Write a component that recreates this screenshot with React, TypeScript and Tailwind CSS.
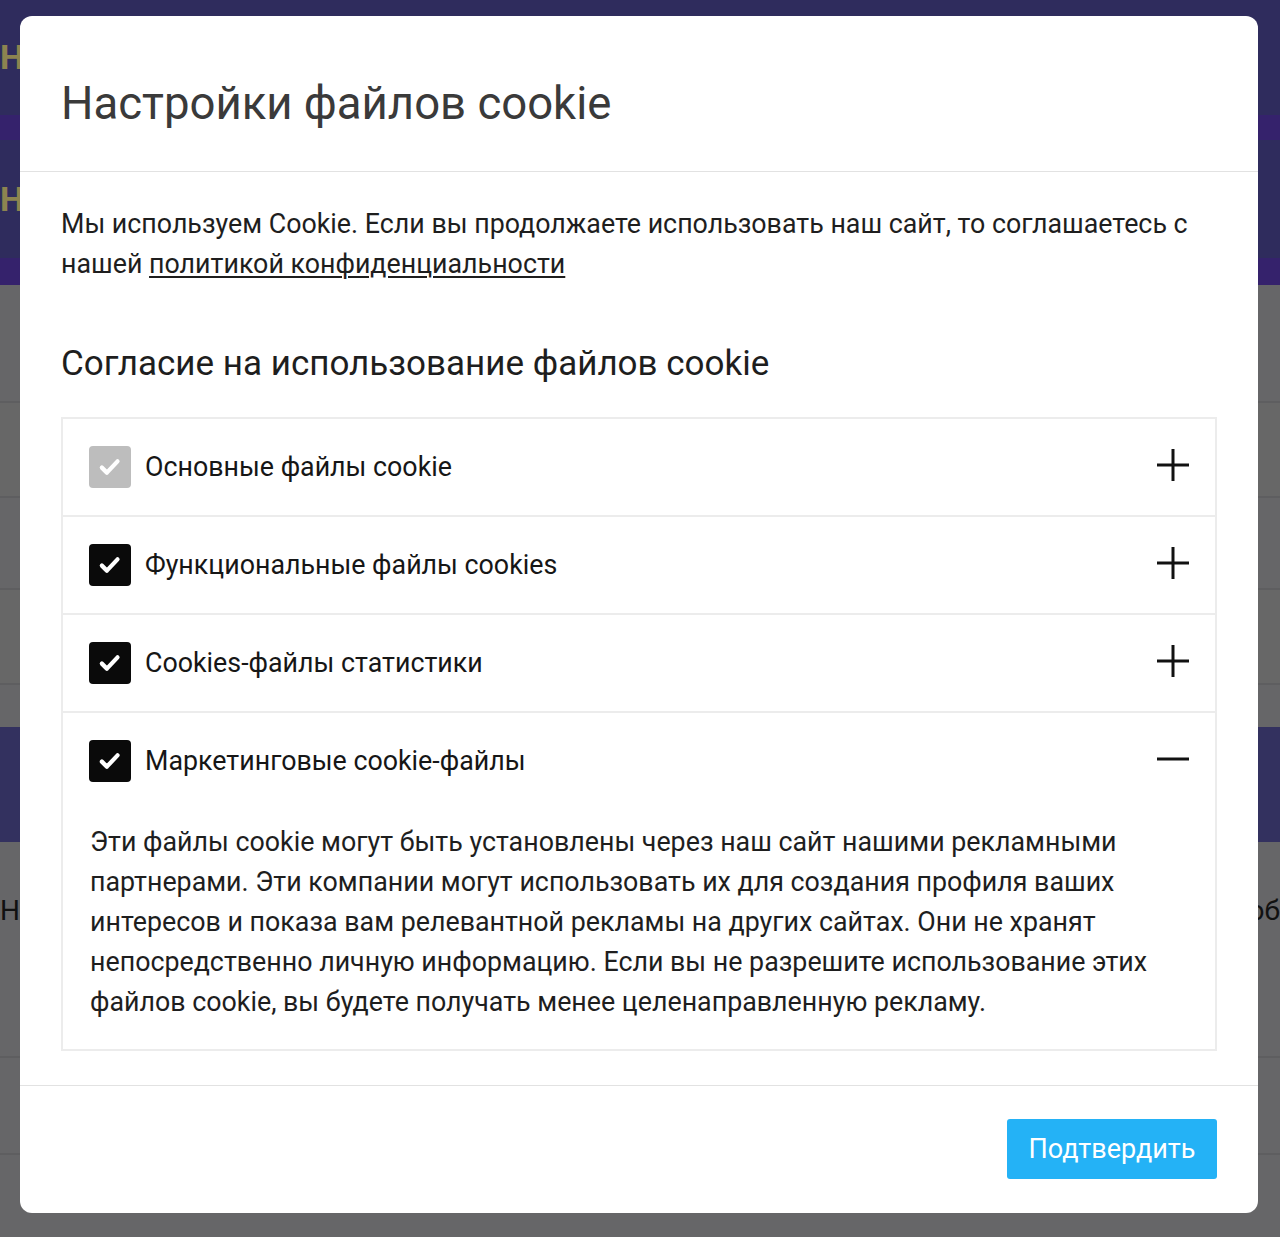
import { useState } from 'react';

const items = [
  { title: 'Основные файлы cookie', locked: true },
  { title: 'Функциональные файлы cookies', locked: false },
  { title: 'Cookies-файлы статистики', locked: false },
  {
    title: 'Маркетинговые cookie-файлы',
    locked: false,
    text: 'Эти файлы cookie могут быть установлены через наш сайт нашими рекламными партнерами. Эти компании могут использовать их для создания профиля ваших интересов и показа вам релевантной рекламы на других сайтах. Они не хранят непосредственно личную информацию. Если вы не разрешите использование этих файлов cookie, вы будете получать менее целенаправленную рекламу.',
  },
];

function Check({ locked }: { locked: boolean }) {
  return (
    <div
      className={
        'w-[42px] h-[42px] rounded-[4px] flex items-center justify-center shrink-0 ' +
        (locked ? 'bg-[#bdbdbd]' : 'bg-[#0a0a0a]')
      }
    >
      <svg width="30" height="30" viewBox="0 0 24 24" fill="none">
        <path d="M5.5 12.5l4 4 8.5-9" stroke="white" strokeWidth="3.4" strokeLinecap="round" strokeLinejoin="round" />
      </svg>
    </div>
  );
}

function Toggle({ open }: { open: boolean }) {
  return (
    <svg width="32" height="32" viewBox="0 0 32 32" className="shrink-0 -mt-[4px]">
      <path d="M0 16h32" stroke="#111" strokeWidth="3" />
      {!open && <path d="M16 0v32" stroke="#111" strokeWidth="3" />}
    </svg>
  );
}

export default function App() {
  const [open, setOpen] = useState<number | null>(3);

  return (
    <div className="relative w-full h-[1237px] overflow-hidden bg-[#666668] font-['Roboto',sans-serif]">
      {/* page behind the overlay */}
      <div className="flex flex-col">
        <div className="h-[115px] bg-[#2f2c5d] flex items-center">
          <span className="text-[34px] font-bold text-[#8c8450]">Н</span>
        </div>
        <div className="h-[25px] bg-[#35226c]" />
        <div className="h-[118px] bg-[#2f2c5d] flex items-center">
          <span className="text-[34px] font-bold text-[#8c8450]">Н</span>
        </div>
        <div className="h-[27px] bg-[#35226c]" />
        <div className="h-[118px] border-b-2 border-[#5e5e60]" />
        <div className="h-[95px] border-b-2 border-[#5e5e60] bg-[#676767]" />
        <div className="h-[92px] border-b-2 border-[#5e5e60]" />
        <div className="h-[95px] border-b-2 border-[#5e5e60] bg-[#676767]" />
        <div className="h-[42px]" />
        <div className="h-[115px] bg-[#33315f]" />
        <div className="h-[216px] border-b-2 border-[#5e5e60] flex items-start justify-between pt-[48px]">
          <span className="text-[28px] text-[#111]">На</span>
          <span className="text-[28px] text-[#111]">об</span>
        </div>
        <div className="h-[97px] border-b-2 border-[#5e5e60]" />
      </div>

      {/* modal */}
      <div className="absolute left-[20px] top-[16px] w-[1238px] h-[1197px] bg-white rounded-[12px] flex flex-col">
        <div className="px-[41px] pt-[62px] pb-[41px] border-b border-[#e2e2e2]">
          <h1 className="text-[45.5px] leading-[52px] text-[#3a3a3a]">Настройки файлов cookie</h1>
        </div>

        <div className="px-[41px] pt-[32px] pb-[34px] border-b border-[#e2e2e2]">
          <p className="text-[26.8px] leading-[40px] text-[#1e1e1e]">
            Мы используем Cookie. Если вы продолжаете использовать наш сайт, то соглашаетесь с нашей{' '}
            <a href="#" className="underline underline-offset-[3px] decoration-[1.5px]">политикой конфиденциальности</a>
          </p>

          <h2 className="mt-[60px] text-[35px] leading-[40px] text-[#1e1e1e]">
            Согласие на использование файлов cookie
          </h2>

          <div className="mt-[33px] border-2 border-[#ececec]">
            {items.map((it, i) => (
              <div key={it.title} className={i > 0 ? 'border-t-2 border-[#ececec]' : ''}>
                <button
                  type="button"
                  onClick={() => setOpen(open === i ? null : i)}
                  className="w-full h-[96px] flex items-center pl-[26px] pr-[26px] text-left"
                >
                  <Check locked={it.locked} />
                  <span className="ml-[14px] flex-1 text-[26.8px] text-[#161616]">{it.title}</span>
                  <Toggle open={open === i} />
                </button>
                {open === i && it.text && (
                  <p className="pl-[27px] pr-[28px] pt-[13px] pb-[27px] text-[26.8px] leading-[40px] text-[#1e1e1e]">
                    {it.text}
                  </p>
                )}
              </div>
            ))}
          </div>
        </div>

        <div className="flex justify-end px-[41px] pt-[33px]">
          <button
            type="button"
            className="w-[210px] h-[60px] rounded-[3px] bg-[#24b2f6] text-white text-[27px]"
          >
            Подтвердить
          </button>
        </div>
      </div>
    </div>
  );
}
